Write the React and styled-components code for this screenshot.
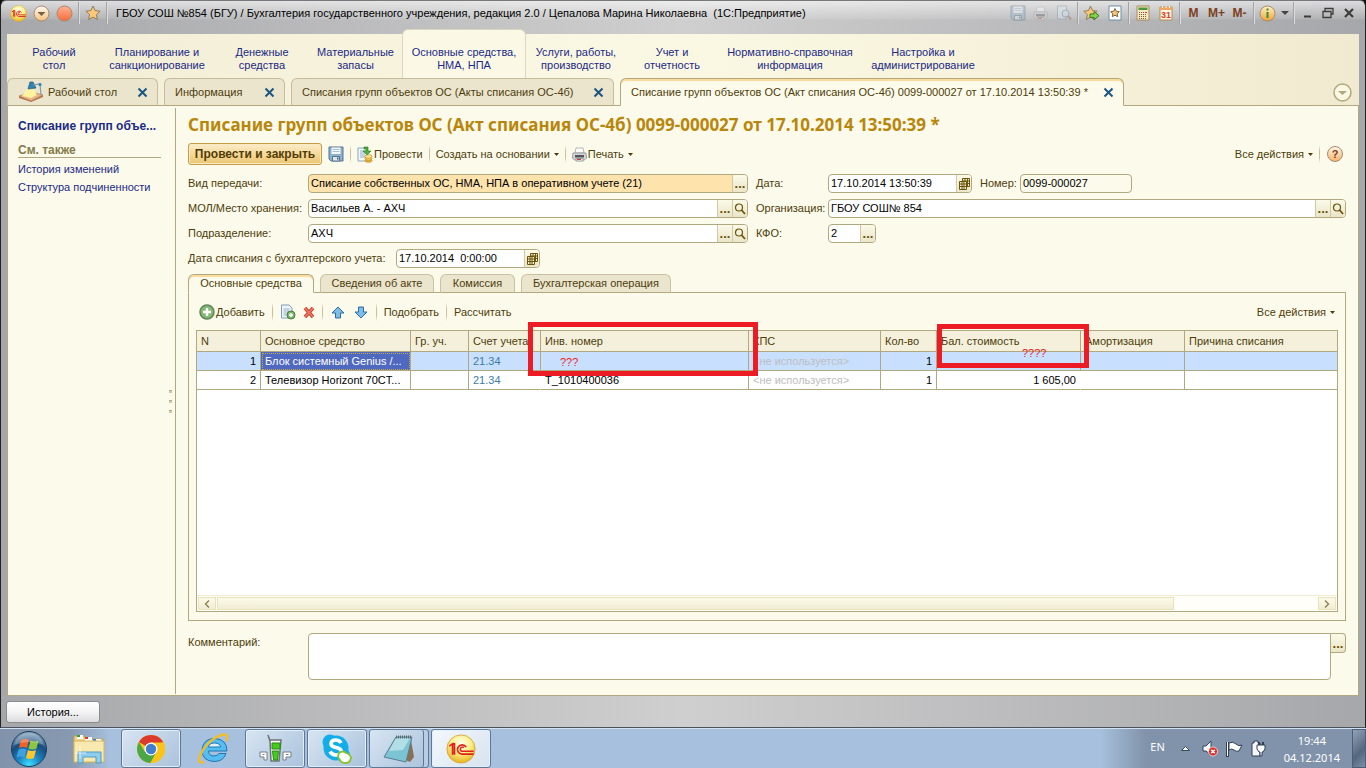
import React from 'react';
import styled, { createGlobalStyle } from 'styled-components';

const line = '#b0a87f';
const ink = '#4d3d0a';
const navy = '#1b2a86';
const cream = '#fcfaea';

const sections = [
    { width: 90, lines: ['Рабочий', 'стол'] },
    { width: 116, lines: ['Планирование и', 'санкционирование'] },
    { width: 94, lines: ['Денежные', 'средства'] },
    { width: 93, lines: ['Материальные', 'запасы'] },
    { width: 124, lines: ['Основные средства,', 'НМА, НПА'], active: true },
    { width: 100, lines: ['Услуги, работы,', 'производство'] },
    { width: 92, lines: ['Учет и', 'отчетность'] },
    { width: 144, lines: ['Нормативно-справочная', 'информация'] },
    { width: 122, lines: ['Настройка и', 'администрирование'] },
];

const windowTabs = [
    { width: 151, title: 'Рабочий стол', icon: true },
    { width: 121, title: 'Информация' },
    { width: 323, title: 'Списания групп объектов ОС (Акты списания ОС-4б)' },
    { width: 504, title: 'Списание групп объектов ОС (Акт списания ОС-4б) 0099-000027 от 17.10.2014 13:50:39 *', active: true },
];

const pageTabs = [
    { width: 126, title: 'Основные средства', active: true },
    { width: 114, title: 'Сведения об акте' },
    { width: 75, title: 'Комиссия' },
    { width: 150, title: 'Бухгалтерская операция' },
];

const columns = [
    { width: 64, title: 'N' },
    { width: 150, title: 'Основное средство' },
    { width: 58, title: 'Гр. уч.' },
    { width: 72, title: 'Счет учета' },
    { width: 208, title: 'Инв. номер' },
    { width: 132, title: 'КПС' },
    { width: 56, title: 'Кол-во' },
    { width: 144, title: 'Бал. стоимость' },
    { width: 104, title: 'Амортизация' },
    { title: 'Причина списания' },
];

const rows = [
    { n: 1, name: 'Блок системный Genius /...', account: '21.34', inv: '', kps: '<не используется>', count: 1, cost: '', current: true },
    { n: 2, name: 'Телевизор Horizont 70CT...', account: '21.34', inv: 'Т_1010400036', kps: '<не используется>', count: 1, cost: '1 605,00' },
];

/* icons */

const Logo1C = ({ size }) => (
    <svg width={size} height={size} viewBox="0 0 32 32">
        <defs>
            <radialGradient id={`gold${size}`} cx="50%" cy="30%" r="70%">
                <stop offset="0" stopColor="#fffef0" />
                <stop offset="0.5" stopColor="#fdf08a" />
                <stop offset="1" stopColor="#e9b21c" />
            </radialGradient>
        </defs>
        <circle cx="16" cy="16" r="15" fill={`url(#gold${size})`} stroke="#d8a63a" />
        <path d="M3.500 13l3.500-2.500V22M9 22V10.500H7" fill="none" stroke="#e0201b" strokeWidth="1.800" />
        <path d="M21.500 14a5 5 0 1 0-4.500 7.500h12.500" fill="none" stroke="#e0201b" strokeWidth="1.800" />
        <path d="M19 14.500a2.300 2.300 0 1 0-2 4h12.500" fill="none" stroke="#e0201b" strokeWidth="1.600" />
    </svg>
);

const Ball = ({ id, light, dark, children }) => (
    <svg width="17" height="17" viewBox="0 0 17 17">
        <defs>
            <linearGradient id={id} x1="0" y1="0" x2="0" y2="1">
                <stop offset="0" stopColor={light} />
                <stop offset="1" stopColor={dark} />
            </linearGradient>
        </defs>
        <circle cx="8.500" cy="8.500" r="7.500" fill={`url(#${id})`} stroke="#a9896a" />
        {children}
    </svg>
);

const Star = () => (
    <svg width="16" height="16" viewBox="0 0 16 16">
        <path d="M8 1l2.100 4.600 5 .6-3.700 3.400 1 5L8 12.100l-4.400 2.500 1-5L.9 6.200l5-.6z" fill="#fbc878" stroke="#8f7c5c" />
    </svg>
);

const StarAdd = () => (
    <svg width="17" height="16" viewBox="0 0 17 16">
        <path d="M7.500 1l2 4.600 4.700.6-3.600 3.400 1 5-4.100-2.500-4.100 2.500 1-5L.8 6.200l4.700-.6z" fill="#fbc878" stroke="#8f7c5c" />
        <path d="M7 9h4V6.500l5 4.200-5 4.200v-2.500H7z" fill="#8ed14a" stroke="#2c7a1e" />
    </svg>
);

const StarDoc = () => (
    <svg width="14" height="16" viewBox="0 0 14 16">
        <path d="M1 1h12v14H1z" fill="#fff" stroke="#6e8fa8" />
        <path d="M7 3.500l1.300 2.800 3 .4-2.200 2 .6 3L7 10.200l-2.700 1.500.6-3-2.200-2 3-.4z" fill="#fbc878" stroke="#7a6640" />
    </svg>
);

const Floppy = () => (
    <svg width="16" height="16" viewBox="0 0 16 16">
        <path d="M1 1h14v14H3l-2-2z" fill="#8db0cc" stroke="#54748f" />
        <path d="M3.500 1.500h9V8h-9z" fill="#f4f8fb" />
        <path d="M4.500 3.500h7M4.500 5.500h7" stroke="#a9c0d2" />
        <path d="M4.500 10.500h7V15h-7z" fill="#dfe7ed" stroke="#54748f" />
        <path d="M9 11.500h1.500v2H9z" fill="#3a5872" />
    </svg>
);

const Printer = () => (
    <svg width="15" height="15" viewBox="0 0 15 15">
        <path d="M4 1h7l1 5H3z" fill="#fff" stroke="#b4b4b4" />
        <path d="M1 6h13l.5 5-2 2h-10l-2-2z" fill="#d4d6d8" stroke="#9a9da1" />
        <path d="M3 8h9v2.500H3z" fill="#54575c" />
        <path d="M4 11.500h7V14H4z" fill="#fff" stroke="#9a9a9a" />
        <path d="M5 12.500h4" stroke="#d33" />
    </svg>
);

const Preview = () => (
    <svg width="16" height="16" viewBox="0 0 16 16">
        <path d="M1.500 1h9v13h-9z" fill="#e4edf5" stroke="#7898b2" />
        <circle cx="9.500" cy="8.500" r="3.500" fill="#cfe6f7" stroke="#5a7e9c" />
        <path d="M12 11l3 3.500" stroke="#a06a44" strokeWidth="2" />
    </svg>
);

const Calculator = () => (
    <svg width="14" height="16" viewBox="0 0 14 16">
        <path d="M1 1h12v14H1z" fill="#f6e7c2" stroke="#a98d5a" />
        <path d="M2.500 2.500h9V5h-9z" fill="#4a9a3c" />
        <path d="M3 7.500h8M3 9.500h8M3 11.500h8M3 13.500h8" stroke="#75603a" strokeDasharray="1 1" />
        <path d="M9.500 7.500h1.500" stroke="#d33" />
    </svg>
);

const Calendar = () => (
    <svg width="14" height="16" viewBox="0 0 14 16">
        <path d="M1 2h12v13H1z" fill="#fff5e4" stroke="#b5884f" />
        <path d="M1 2h12v3H1z" fill="#f0a860" />
        <path d="M3.500 1v2M7 1v2M10.500 1v2" stroke="#fff" />
        <text x="7" y="13" textAnchor="middle" fontFamily="Liberation Sans, sans-serif" fontSize="9" fontWeight="bold" fill="#e0401c">31</text>
    </svg>
);

const DeskLamp = () => (
    <svg width="26" height="22" viewBox="0 0 26 22">
        <path d="M1 15l12-4 12 3-12 6z" fill="#e8b48a" stroke="#b87c50" strokeWidth="0.700" />
        <path d="M1 15v2l12 4 12-5v-2l-12 6z" fill="#b4754a" />
        <path d="M10 7l-6 8 9 2 6-3-4-7z" fill="#fff3a0" />
        <path d="M12 1h3l3 6-8 1z" fill="#2f83b2" stroke="#1c5a80" strokeWidth="0.700" />
        <path d="M15 4l7-1 1 11" fill="none" stroke="#7a9cb2" strokeWidth="1.200" />
        <circle cx="22" cy="3.500" r="1.600" fill="#2f83b2" />
    </svg>
);

const Cross = () => (
    <svg width="11" height="11" viewBox="0 0 11 11">
        <path d="M1.500 1.500l8 8M9.500 1.500l-8 8" stroke="#1d5680" strokeWidth="2" />
    </svg>
);

const Loupe = () => (
    <svg width="12" height="12" viewBox="0 0 12 12">
        <circle cx="5" cy="4.500" r="3.500" fill="none" stroke="#6b540c" strokeWidth="1.200" />
        <path d="M7.500 7l3.500 4" stroke="#6b540c" strokeWidth="1.800" />
    </svg>
);

const DateGrid = () => (
    <svg width="11" height="12" viewBox="0 0 11 12">
        <path d="M3.500 .5h7v8h-7zM3.500 3h7M3.500 5.500h7M6 .5v8M8.500 .5v8" fill="#f3efcf" stroke="#6b540c" />
        <path d="M.5 3.500h7v8h-7zM.5 6h7M.5 8.500h7M3 3.500v8M5 3.500v8" fill="#f3efcf" stroke="#6b540c" />
    </svg>
);

const PostDoc = () => (
    <svg width="16" height="17" viewBox="0 0 16 17">
        <path d="M1 2h9v13H1z" fill="#f5f9fc" stroke="#8aa5ba" />
        <path d="M3 5h5M3 7h5M3 9h5M3 11h5" stroke="#8fb0c9" />
        <path d="M7 1h4v4h3l-4 4-4-4h3V3H7z" fill="#4fae3c" stroke="#247a1c" strokeWidth="0.600" />
        <ellipse cx="11.500" cy="14.500" rx="3.500" ry="1.800" fill="#eab42c" stroke="#b98a28" strokeWidth="0.700" />
        <ellipse cx="11.500" cy="12.500" rx="3.500" ry="1.800" fill="#f8d058" stroke="#b98a28" strokeWidth="0.700" />
        <ellipse cx="11.500" cy="10.500" rx="3.500" ry="1.800" fill="#ffe68a" stroke="#b98a28" strokeWidth="0.700" />
    </svg>
);

const AddBall = () => (
    <svg width="16" height="16" viewBox="0 0 16 16">
        <circle cx="8" cy="8" r="7" fill="#86b878" stroke="#5f8457" strokeWidth="1.500" />
        <path d="M8 4v8M4 8h8" stroke="#fff" strokeWidth="2.400" />
    </svg>
);

const CopyDoc = () => (
    <svg width="16" height="16" viewBox="0 0 16 16">
        <path d="M1.500 1H9l3 3v10H1.500z" fill="#eef5fa" stroke="#7f9db3" />
        <path d="M3.500 5h6M3.500 7h6M3.500 9h4M3.500 11h4" stroke="#93b2c9" />
        <circle cx="11" cy="11" r="4" fill="#7db768" stroke="#4a7d3c" />
        <path d="M11 9v4M9 11h4" stroke="#fff" strokeWidth="1.500" />
    </svg>
);

const Delete = () => (
    <svg width="12" height="13" viewBox="0 0 12 13">
        <path d="M2 2l8 9M10 2l-8 9" stroke="#c23d2c" strokeWidth="3.400" />
        <path d="M2 2l8 9M10 2l-8 9" stroke="#ee7767" strokeWidth="1.800" />
    </svg>
);

const Arrow = ({ down }) => (
    <svg width="16" height="13" viewBox="-1 0 16 13">
        <path d={down ? 'M4.500 1h5v5H13l-6 6-6-6h3.500z' : 'M4.500 12h5V7H13L7 1 1 7h3.500z'} fill="#7cbdea" stroke="#2d6da0" />
    </svg>
);

const Chevron = ({ left }) => (
    <svg width="6" height="8" viewBox="0 0 6 8">
        <path d={left ? 'M5 0.500L1.500 4 5 7.500' : 'M1 0.500L4.500 4 1 7.500'} fill="none" stroke="#8c8150" strokeWidth="1.400" />
    </svg>
);

const Windows = () => (
    <svg width="38" height="38" viewBox="0 0 38 38">
        <defs>
            <radialGradient id="orb" cx="50%" cy="95%" r="90%">
                <stop offset="0" stopColor="#3fe0ff" />
                <stop offset="0.350" stopColor="#1c86c4" />
                <stop offset="0.700" stopColor="#174d7c" />
                <stop offset="1" stopColor="#7f9fbb" />
            </radialGradient>
        </defs>
        <circle cx="19" cy="19" r="17.500" fill="url(#orb)" stroke="#1d3c5c" />
        <path d="M11 10q4-2 8 0l-2 8q-4-2-8 0z" fill="#f0622a" />
        <path d="M20.500 10.500q4 2 8 0l-2 8q-4 2-8 0z" fill="#8cc63e" />
        <path d="M8.500 19.500q4-2 8 0l-2 8q-4-2-8 0z" fill="#3f9fe0" />
        <path d="M18 20q4 2 8 0l-2 8q-4 2-8 0z" fill="#fcc62c" />
        <path d="M4 15Q8 3 19 3t15 12Q19 9 4 15z" fill="#fff" opacity="0.250" />
    </svg>
);

const Explorer = () => (
    <svg width="34" height="32" viewBox="0 0 34 32">
        <path d="M2 3h10l2 3h17v23H2z" fill="#f0d486" stroke="#c69f45" />
        <path d="M5 2h6v4H5z" fill="#fff" /><path d="M5 2h3v2H5z" fill="#2da32f" />
        <path d="M13 4h7v4h-7z" fill="#fff" /><path d="M13 4h3v2h-3z" fill="#d83c2c" />
        <path d="M21 6h8v4h-8z" fill="#fff" /><path d="M21 6h3v2h-3z" fill="#2c87d8" />
        <path d="M2 8h30v21H2z" fill="#fae9ae" stroke="#d6b45c" />
        <path d="M6 30V19h23v11h-5v-6H11v6z" fill="#8fcdec" stroke="#4f9cc8" />
        <path d="M8 13v13M3 20h11" stroke="#fff" opacity="0.700" />
    </svg>
);

const Chrome = () => (
    <svg width="30" height="30" viewBox="0 0 30 30">
        <circle cx="15" cy="15" r="14" fill="#fbc518" />
        <path d="M15 15L2.900 8a14 14 0 0 1 24.300 0z" fill="#dc3a2c" />
        <path d="M2.900 8a14 14 0 0 0 11.500 21l6-11L15 15 9 18z" fill="#4ba745" />
        <path d="M15 8.500h12.400A14 14 0 0 1 14.400 29l6.200-10.500z" fill="#fbc518" />
        <circle cx="15" cy="15" r="6.500" fill="#fff" />
        <circle cx="15" cy="15" r="5.200" fill="#3f7fce" />
    </svg>
);

const InternetExplorer = () => (
    <svg width="32" height="32" viewBox="0 0 32 32">
        <path d="M30 18H11.500q.5 5 5.500 5 3.500 0 5-2.500h7Q26.500 28.500 17 28.500 5 28 5 17 6 5.500 17.500 5.500 30 6 30 18z" fill="#56bdf0" stroke="#2176b4" />
        <path d="M11.500 14h12q-.5-4-6-4t-6 4z" fill="#dff0fa" stroke="#2176b4" />
        <path d="M7 29q-7 2-4-6Q7 12 18 5q11-6 12-2 .5 2-1 5" fill="none" stroke="#f4bd25" strokeWidth="2.400" />
    </svg>
);

const Robot = () => (
    <svg width="34" height="30" viewBox="0 0 34 30">
        <path d="M10 1l2 6M12 6h11l-2 21h-8z" fill="#f8f8f8" stroke="#6d7277" strokeWidth="1.500" />
        <path d="M14 9h8v6h-8zM14.500 17h6l-1 9h-4z" fill="#46cc1c" stroke="#278d0c" />
        <path d="M2 18h7v8H6v-3H2zM25 18h8v5h-5v3h-3z" fill="#fff" stroke="#777c82" />
        <path d="M4.500 20.500h2M28 20.500h2.500" stroke="#777c82" />
    </svg>
);

const Skype = () => (
    <svg width="32" height="32" viewBox="0 0 32 32">
        <circle cx="15" cy="15" r="12.500" fill="#12aeea" />
        <circle cx="9" cy="9" r="7.500" fill="#12aeea" /><circle cx="22" cy="22" r="7" fill="#12aeea" />
        <path d="M20 10q-1.500-3-5.500-3T10 10.500q0 3 5 4t5.500 4Q20 22 15.500 22T9 18.500" fill="none" stroke="#fff" strokeWidth="3.600" />
        <path d="M18 20q4-3 7 0 4 1 5 5-1 5-5 5-5 0-6-3-3-3-1-7z" fill="#fff" stroke="#86c32c" strokeWidth="1.800" />
    </svg>
);

const Notepad = () => (
    <svg width="32" height="30" viewBox="0 0 32 30">
        <path d="M28 6l3 17-4 5-4-2z" fill="#8a6f56" />
        <path d="M13 3h16l-6 25L1 23z" fill="#7cc4d4" stroke="#55808e" />
        <path d="M13 4h14L20 16 6 17z" fill="#c8e9ef" opacity="0.700" />
        <path d="M13 3h16" stroke="#60676b" strokeWidth="3" strokeDasharray="1 1" />
    </svg>
);

const Speaker = () => (
    <svg width="16" height="17" viewBox="0 0 16 17">
        <path d="M1 6h3l5-5v14l-5-4H1z" fill="#f5f7fa" stroke="#33435a" />
        <circle cx="11" cy="11.500" r="4.500" fill="#dc2a22" stroke="#fff" strokeWidth="0.700" />
        <path d="M9.200 9.700l3.600 3.600M12.800 9.700l-3.600 3.600" stroke="#fff" strokeWidth="1.500" />
    </svg>
);

const Flag = () => (
    <svg width="17" height="16" viewBox="0 0 17 16">
        <path d="M3 2q4-2 7 1t6 1l-3 6q-3 1-5-1t-5 0z" fill="#fff" stroke="#2f3f55" />
        <path d="M1.500 1v15" stroke="#2f3f55" strokeWidth="3" /><path d="M1.500 1v14" stroke="#fff" />
    </svg>
);

const Plug = () => (
    <svg width="15" height="17" viewBox="0 0 15 17">
        <path d="M1 3h2V1h4v2h2v13H1z" fill="#f4f6f9" stroke="#2f3f55" />
        <path d="M6 5h8v4l-2 3h-1v4H9v-4H8L6 9z" fill="#fff" stroke="#2f3f55" />
        <path d="M8 2v3M12 2v3" stroke="#2f3f55" strokeWidth="2" />
    </svg>
);

const Caret = () => (
    <CaretSvg width="5" height="3" viewBox="0 0 5 3"><path d="M0 0h5L2.500 3z" fill={ink} /></CaretSvg>
);

const ComboField = ({ id, label, value, tint, readOnly, width, date, loupe, plain, inset }) => (
    <>
        <Label htmlFor={id} $inset={inset}>{label}</Label>
        <Field $tint={tint} $width={width}>
            <FieldInput id={id} defaultValue={value} readOnly={readOnly} />
            {!plain && (
                <FieldButton type="button" aria-label="Выбрать">
                    {date ? <DateGrid /> : <Dots>...</Dots>}
                </FieldButton>
            )}
            {loupe && <FieldButton type="button" aria-label="Открыть"><Loupe /></FieldButton>}
        </Field>
    </>
);

const App = () => {
    return (
        <Screen>
            <GlobalStyle />
            <Window>
                <TitleBar>
                    <TitleButton type="button" aria-label="1С"><Logo1C size={17} /></TitleButton>
                    <TitleButton type="button" aria-label="Меню">
                        <Ball id="menuBall" light="#fffdf5" dark="#f3c07a"><path d="M4.500 7h8l-4 4z" fill="#7a6040" /></Ball>
                    </TitleButton>
                    <TitleButton type="button" aria-label="Стоп"><Ball id="stopBall" light="#ffb193" dark="#f56c3c" /></TitleButton>
                    <TitleSeparator />
                    <TitleButton type="button" aria-label="Избранное"><Star /></TitleButton>
                    <TitleSeparator />
                    <Caption>ГБОУ СОШ №854 (БГУ) / Бухгалтерия государственного учреждения, редакция 2.0 / Цепалова Марина Николаевна &nbsp;(1С:Предприятие)</Caption>
                    <TitleButton type="button" aria-label="Сохранить" disabled><Floppy /></TitleButton>
                    <TitleButton type="button" aria-label="Печать" disabled><Printer /></TitleButton>
                    <TitleButton type="button" aria-label="Просмотр" disabled><Preview /></TitleButton>
                    <TitleSeparator />
                    <TitleButton type="button" aria-label="Добавить в избранное"><StarAdd /></TitleButton>
                    <TitleButton type="button" aria-label="Ссылки"><StarDoc /></TitleButton>
                    <TitleSeparator />
                    <TitleButton type="button" aria-label="Калькулятор"><Calculator /></TitleButton>
                    <TitleButton type="button" aria-label="Календарь"><Calendar /></TitleButton>
                    <TitleSeparator />
                    <TitleButton type="button">M</TitleButton>
                    <TitleButton type="button">M+</TitleButton>
                    <TitleButton type="button">M-</TitleButton>
                    <TitleSeparator />
                    <TitleButton type="button" aria-label="О программе">
                        <Ball id="infoBall" light="#fff0c8" dark="#f0a436">
                            <path d="M8.500 7v6M8.500 3.500v2" stroke="#3f8a2c" strokeWidth="2" />
                        </Ball>
                    </TitleButton>
                    <TitleButton type="button" aria-label="Ещё" $width={12}>
                        <svg width="8" height="4" viewBox="0 0 8 4"><path d="M0 0h8L4 4z" fill="#444" /></svg>
                    </TitleButton>
                    <TitleSeparator />
                    <TitleButton type="button" aria-label="Свернуть" $width={21}>
                        <svg width="12" height="12" viewBox="0 0 12 12"><path d="M3 9.500h7" stroke="#3c3c3c" strokeWidth="2" /></svg>
                    </TitleButton>
                    <TitleButton type="button" aria-label="Восстановить" $width={21}>
                        <svg width="12" height="12" viewBox="0 0 12 12"><path d="M3 4V1.500h8V7H9M1 4.500h8v6H1z" fill="none" stroke="#3c3c3c" strokeWidth="1.300" /></svg>
                    </TitleButton>
                    <TitleButton type="button" aria-label="Закрыть" $width={21}>
                        <svg width="10" height="10" viewBox="0 0 10 10"><path d="M1 1l8 8M9 1L1 9" stroke="#3c3c3c" strokeWidth="2.200" /></svg>
                    </TitleButton>
                </TitleBar>

                <Sections>
                    {sections.map((s) => (
                        <Section key={s.lines[0]} href="#" $width={s.width} $active={s.active}>
                            {s.lines[0]}<br />{s.lines[1]}
                        </Section>
                    ))}
                </Sections>

                <WindowTabs>
                    {windowTabs.map((t) => (
                        <WindowTab key={t.title} $width={t.width} $active={t.active}>
                            {t.icon && <DeskLamp />}
                            <TabTitle type="button">{t.title}</TabTitle>
                            <TabClose type="button" aria-label="Закрыть вкладку"><Cross /></TabClose>
                        </WindowTab>
                    ))}
                    <TabsRest>
                        <TabClose type="button" aria-label="Список окон">
                            <svg width="19" height="19" viewBox="0 0 19 19">
                                <circle cx="9.500" cy="9.500" r="8.500" fill="#faf7e2" stroke={line} strokeWidth="1.500" />
                                <path d="M5 8h9l-4.500 4z" fill={line} />
                            </svg>
                        </TabClose>
                    </TabsRest>
                </WindowTabs>

                <Workspace>
                    <Sidebar>
                        <CurrentLink href="#">Списание групп объе...</CurrentLink>
                        <SideHeading>См. также</SideHeading>
                        <SideLink href="#">История изменений</SideLink>
                        <SideLink href="#">Структура подчиненности</SideLink>
                    </Sidebar>
                    <Grip><i /><i /><i /></Grip>

                    <Form>
                        <Title>Списание групп объектов ОС (Акт списания ОС-4б) 0099-000027 от 17.10.2014 13:50:39 *</Title>
                        <Commands>
                            <PrimaryButton type="button">Провести и закрыть</PrimaryButton>
                            <Command type="button" aria-label="Записать"><Floppy /></Command>
                            <Separator />
                            <Command type="button"><PostDoc />Провести</Command>
                            <Separator />
                            <Command type="button">Создать на основании <Caret /></Command>
                            <Separator />
                            <Command type="button"><Printer />Печать <Caret /></Command>
                            <Spacer />
                            <Command type="button">Все действия <Caret /></Command>
                            <Separator />
                            <HelpButton type="button" aria-label="Справка">?</HelpButton>
                        </Commands>

                        <Fields>
                            <ComboField id="kind" label="Вид передачи:" value="Списание собственных ОС, НМА, НПА в оперативном учете (21)" tint="#fee3ad" />
                            <ComboField id="date" label="Дата:" value="17.10.2014 13:50:39" date width={144} inset={8} />
                            <NumberCell>
                                <ComboField id="number" label="Номер:" value="0099-000027" plain readOnly tint={cream} width={112} />
                            </NumberCell>
                            <ComboField id="place" label="МОЛ/Место хранения:" value="Васильев А. - АХЧ" loupe />
                            <ComboField id="org" label="Организация:" value="ГБОУ СОШ№ 854" loupe inset={8} />
                            <ComboField id="unit" label="Подразделение:" value="АХЧ" loupe />
                            <ComboField id="kfo" label="КФО:" value="2" width={48} inset={8} />
                        </Fields>
                        <DateRow>
                            <ComboField id="offDate" label="Дата списания с бухгалтерского учета:" value="17.10.2014  0:00:00" date width={144} />
                        </DateRow>

                        <PageTabs>
                            {pageTabs.map((t) => (
                                <PageTab key={t.title} type="button" $width={t.width} $active={t.active}>{t.title}</PageTab>
                            ))}
                        </PageTabs>
                        <Page>
                            <TableCommands>
                                <Command type="button"><AddBall />Добавить</Command>
                                <Separator />
                                <Command type="button" aria-label="Скопировать"><CopyDoc /></Command>
                                <Command type="button" aria-label="Удалить"><Delete /></Command>
                                <Separator />
                                <Command type="button" aria-label="Вверх"><Arrow /></Command>
                                <Command type="button" aria-label="Вниз"><Arrow down /></Command>
                                <Separator />
                                <Command type="button">Подобрать</Command>
                                <Separator />
                                <Command type="button">Рассчитать</Command>
                                <Spacer />
                                <Command type="button">Все действия <Caret /></Command>
                            </TableCommands>
                            <TableBox>
                                <Table>
                                    <colgroup>
                                        {columns.map((c) => <Column key={c.title} $width={c.width} />)}
                                    </colgroup>
                                    <thead>
                                        <tr>{columns.map((c) => <HeadCell key={c.title}>{c.title}</HeadCell>)}</tr>
                                    </thead>
                                    <tbody>
                                        {rows.map((r) => (
                                            <Row key={r.n} $current={r.current}>
                                                <Cell $right>{r.n}</Cell>
                                                <Cell $selected={r.current}>{r.name}</Cell>
                                                <Cell />
                                                <Cell $color="#3d7ba8" $open={!r.current}>{r.account}</Cell>
                                                <Cell>{r.inv}</Cell>
                                                <Cell $color="#bdbdbd">{r.kps}</Cell>
                                                <Cell $right>{r.count}</Cell>
                                                <Cell $right $open={!r.current}>{r.cost}</Cell>
                                                <Cell />
                                                <Cell />
                                            </Row>
                                        ))}
                                    </tbody>
                                </Table>
                                <ScrollBar>
                                    <ScrollButton type="button" aria-label="Влево"><Chevron left /></ScrollButton>
                                    <ScrollTrack><ScrollThumb /></ScrollTrack>
                                    <ScrollButton type="button" aria-label="Вправо"><Chevron /></ScrollButton>
                                </ScrollBar>
                                <InvMark>???</InvMark>
                                <CostMark>????</CostMark>
                            </TableBox>
                        </Page>

                        <CommentRow>
                            <Label htmlFor="comment">Комментарий:</Label>
                            <Comment id="comment" />
                            <CommentButton type="button" aria-label="Изменить комментарий"><Dots>...</Dots></CommentButton>
                        </CommentRow>
                    </Form>
                </Workspace>

                <StatusBar>
                    <HistoryButton type="button">История...</HistoryButton>
                </StatusBar>
            </Window>

            <TaskBar>
                <TaskButton type="button" aria-label="Пуск" $width={57}><Windows /></TaskButton>
                <TaskButton type="button" aria-label="Проводник" $width={60}><Explorer /></TaskButton>
                <TaskButton type="button" aria-label="Chrome" $width={60} $open><Chrome /></TaskButton>
                <TaskButton type="button" aria-label="Internet Explorer" $width={60}><InternetExplorer /></TaskButton>
                <TaskButton type="button" aria-label="QIP" $width={60} $open><Robot /></TaskButton>
                <TaskButton type="button" aria-label="Skype" $width={60} $open><Skype /></TaskButton>
                <TaskButton type="button" aria-label="Блокнот" $width={60} $open $stacked><Notepad /></TaskButton>
                <TaskButton type="button" aria-label="1С:Предприятие" $width={60} $open $front><Logo1C size={30} /></TaskButton>
                <Tray>
                    <Language>EN</Language>
                    <svg width="9" height="5" viewBox="0 0 9 5"><path d="M.5 4.500h8L4.500.5z" fill="#fff" stroke="#3c4c62" /></svg>
                    <TrayIcons><Speaker /><Flag /><Plug /></TrayIcons>
                    <Clock>19:44<br />04.12.2014</Clock>
                    <ShowDesktop type="button" aria-label="Свернуть все окна" />
                </Tray>
            </TaskBar>
        </Screen>
    );
};

export default App;

const GlobalStyle = createGlobalStyle`
    *{
        box-sizing:border-box;
    }
    body{
        margin:0;
        background:#111;
        font:11px/13px "Liberation Sans", Arial, sans-serif;
        color:${ink};
    }
    button, input, textarea{
        font:inherit;
        color:inherit;
        margin:0;
        padding:0;
        border:0;
        background:none;
    }
    a{
        color:${navy};
        text-decoration:none;
    }
    svg{
        display:block;
        flex:none;
    }
`

const Screen = styled.div`
    display:flex;
    flex-direction:column;
    min-height:100vh;
`

const Window = styled.div`
    flex:1;
    display:flex;
    flex-direction:column;
    padding:0 6px;
    border:1px solid #222;
    border-top-color:#77787c;
    border-bottom-color:#4a525e;
    border-radius:6px 6px 0 0;
    background:
        linear-gradient(rgba(255,255,255,0.6), rgba(255,255,255,0.1) 18px, rgba(255,255,255,0) 19px),
        linear-gradient(90deg, #a6a7aa, #cfcfcf 50%, #a6a7aa);
`

const TitleBar = styled.header`
    display:flex;
    align-items:center;
    height:24px;
    margin-bottom:4px;
`

const TitleButton = styled.button`
    display:flex;
    align-items:center;
    justify-content:center;
    flex:none;
    width:${(p) => p.$width || 23}px;
    height:20px;
    font-size:12px;
    font-weight:bold;
    color:#7c4020;

    &:disabled{
        opacity:0.4;
    }
`

const TitleSeparator = styled.span`
    width:1px;
    height:22px;
    margin:0 2px;
    background:#a2a3a6;
    box-shadow:1px 0 #dcdcdc;
`

const Caption = styled.div`
    flex:1;
    min-width:0;
    padding-left:7px;
    overflow:hidden;
    white-space:nowrap;
    line-height:16px;
    color:#000;
`

const Sections = styled.nav`
    display:flex;
    height:49px;
    padding-left:2px;
    background:linear-gradient(90deg, #f2ecd4, #faf8e3 45%, #f9f6e0 60%, #f1ead0) 0 5px no-repeat;
`

const Section = styled.a`
    flex:none;
    width:${(p) => p.$width}px;
    padding-top:16px;
    border-radius:6px 6px 0 0;
    border:1px solid transparent;
    border-bottom:0;
    text-align:center;
    background:${(p) => p.$active ? '#fbf9e6' : 'none'};
    border-color:${(p) => p.$active ? '#d9d5c0' : 'transparent'};
`

const WindowTabs = styled.div`
    display:flex;
    gap:6px;
    height:28px;
    background:linear-gradient(90deg, #f2ecd4, #faf8e3 45%, #f9f6e0 60%, #f1ead0);
    box-shadow:inset 0 -1px ${line};
`

const WindowTab = styled.div`
    flex:none;
    display:flex;
    align-items:center;
    width:${(p) => p.$width}px;
    padding:0 9px 0 10px;
    border:1px solid ${(p) => p.$active ? line : '#c4bc9c'};
    border-bottom-color:${(p) => p.$active ? cream : line};
    border-radius:6px 6px 0 0;
    background:${(p) => p.$active ? cream : '#ebe5ce'};
    box-shadow:${(p) => p.$active ? 'inset 0 2px #fbdc9a' : 'none'};
`

const TabTitle = styled.button`
    flex:1;
    min-width:0;
    overflow:hidden;
    white-space:nowrap;
    text-align:left;

    svg + &{
        padding-left:4px;
    }
`

const TabClose = styled.button`
    display:flex;
`

const TabsRest = styled.div`
    flex:1;
    display:flex;
    align-items:center;
    justify-content:flex-end;
    padding-right:7px;
`

const Workspace = styled.div`
    flex:1;
    display:flex;
    background:${cream};
    border:1px solid ${line};
    border-top:0;
`

const Sidebar = styled.aside`
    flex:none;
    display:flex;
    flex-direction:column;
    width:153px;
    padding:13px 0 0 10px;
`

const CurrentLink = styled.a`
    font-size:12px;
    line-height:14px;
    font-weight:bold;
    white-space:nowrap;
`

const SideHeading = styled.h2`
    margin:10px 0 5px;
    border-bottom:1px solid ${line};
    font-size:12px;
    line-height:14px;
    color:#847a4c;
`

const SideLink = styled.a`
    line-height:13px;
    margin-bottom:5px;
    white-space:nowrap;
`

const Grip = styled.div`
    flex:none;
    display:flex;
    flex-direction:column;
    justify-content:center;
    align-items:center;
    gap:7px;
    width:15px;
    margin:2px 0 1px;
    padding-left:4px;
    border-right:1px solid ${line};

    i{
        width:3px;
        height:3px;
        background:#cfc9ad;
        border-top:1px solid ${line};
    }
`

const Form = styled.main`
    flex:1;
    min-width:0;
    display:flex;
    flex-direction:column;
    padding:7px 12px 15px;
`

const Title = styled.h1`
    margin:0 0 6px;
    font:bold 17px/24px "Noto Sans", sans-serif;
    color:#b8860b;
    white-space:nowrap;
`

const Commands = styled.div`
    display:flex;
    align-items:center;
    height:22px;
    margin-bottom:9px;
`

const PrimaryButton = styled.button`
    width:134px;
    height:22px;
    margin-right:3px;
    border:1px solid #c69c48;
    border-radius:3px;
    background:linear-gradient(#fbeccb, #f4d691 60%, #e9c474);
    box-shadow:inset 0 0 0 1px #fbe9bf;
    font-size:12px;
    font-weight:bold;
    color:#523c06;
    white-space:nowrap;
`

const Command = styled.button`
    display:flex;
    align-items:center;
    gap:1px;
    height:20px;
    padding:0 3px;
    white-space:nowrap;
`

const CaretSvg = styled.svg`
    margin-left:3px;
`

const Separator = styled.span`
    width:1px;
    height:18px;
    margin:0 3px;
    background:linear-gradient(rgba(176,168,127,0), #c9c29f 30%, #c9c29f 70%, rgba(176,168,127,0));
`

const Spacer = styled.span`
    flex:1;
`

const HelpButton = styled.button`
    width:16px;
    height:16px;
    margin:0 3px 0 4px;
    border:1px solid #a48b70;
    border-radius:50%;
    background:linear-gradient(#fff4e4, #f6b56c);
    font-weight:bold;
    line-height:13px;
    color:#7c4020;
`

const Fields = styled.div`
    display:grid;
    grid-template-columns:120px minmax(0, 440fr) 80px 144px minmax(0, 374fr);
    row-gap:6px;

    /* the organization field spans the rest of the row */
    > :nth-child(9){
        grid-column:4 / 6;
    }
`

const Label = styled.label`
    padding-left:${(p) => p.$inset || 0}px;
    line-height:19px;
    white-space:nowrap;
`

const Field = styled.div`
    display:flex;
    width:${(p) => p.$width ? p.$width + 'px' : 'auto'};
    height:19px;
    border:1px solid ${line};
    border-radius:4px;
    background:${(p) => p.$tint || '#fff'};
    overflow:hidden;
`

const FieldInput = styled.input`
    flex:1;
    min-width:0;
    padding-left:2px;
    color:#000;
    outline:0;
`

const FieldButton = styled.button`
    display:flex;
    align-items:center;
    justify-content:center;
    flex:none;
    width:15px;
    border-left:1px solid #cfc9a8;
    background:linear-gradient(#fbf9e8, #ebe6c8);
`

const Dots = styled.span`
    font-size:13px;
    font-weight:bold;
    line-height:17px;
    color:#6b540c;
`

const NumberCell = styled.div`
    display:flex;
    gap:3px;
    padding-left:8px;
`

const DateRow = styled.div`
    display:flex;
    gap:8px;
    margin:6px 0;

    label{
        width:200px;
    }
`

const PageTabs = styled.div`
    display:flex;
    gap:6px;
    height:19px;
    position:relative;
    margin-bottom:-1px;
`

const PageTab = styled.button`
    width:${(p) => p.$width}px;
    border:1px solid ${(p) => p.$active ? line : '#c9c2a2'};
    border-bottom-color:${(p) => p.$active ? cream : line};
    border-radius:6px 6px 0 0;
    background:${(p) => p.$active ? cream : '#ebe5ce'};
    box-shadow:${(p) => p.$active ? 'inset 0 2px #fbdc9a' : 'none'};
    white-space:nowrap;
`

const Page = styled.section`
    flex:1;
    display:flex;
    flex-direction:column;
    padding:9px 7px 8px;
    border:1px solid ${line};
`

const TableCommands = styled.div`
    display:flex;
    align-items:center;
    gap:1px;
    height:20px;
    margin-bottom:8px;
`

const TableBox = styled.div`
    flex:1;
    display:flex;
    flex-direction:column;
    position:relative;
    border:1px solid ${line};
    background:#fff;
`

const Table = styled.table`
    width:100%;
    table-layout:fixed;
    border-collapse:separate;
    border-spacing:0;
`

const Column = styled.col`
    width:${(p) => p.$width ? p.$width + 'px' : 'auto'};
`

const HeadCell = styled.th`
    height:21px;
    padding:0 4px;
    border-right:1px solid ${line};
    border-bottom:1px solid ${line};
    background:#f4f0dc;
    font-weight:normal;
    text-align:left;
    white-space:nowrap;

    &:last-child{
        border-right:0;
    }
`

const Row = styled.tr`
    background:${(p) => p.$current ? '#c8e0fe' : '#fff'};
`

const Cell = styled.td`
    height:19px;
    padding:0 4px;
    border-right:1px solid ${(p) => p.$open ? 'transparent' : line};
    border-bottom:1px solid ${line};
    background:${(p) => p.$selected ? '#5069c0' : 'none'};
    outline:${(p) => p.$selected ? '1px dotted #c8a848' : 'none'};
    outline-offset:-2px;
    color:${(p) => p.$selected ? '#fff' : p.$color || '#000'};
    text-align:${(p) => p.$right ? 'right' : 'left'};
    white-space:nowrap;

    &:last-child{
        border-right:0;
    }
`

const ScrollBar = styled.div`
    display:flex;
    gap:1px;
    height:16px;
    margin-top:auto;
    padding:1px;
    border-top:1px solid #f0ebd2;
    background:#fffef8;
`

const ScrollButton = styled.button`
    display:flex;
    align-items:center;
    justify-content:center;
    width:18px;
    border:1px solid #ebe3b8;
    background:linear-gradient(#fcfaea, #f0ecd4);
`

const ScrollTrack = styled.div`
    flex:1;
    display:flex;
`

const ScrollThumb = styled.div`
    width:87%;
    border:1px solid #ebe3b8;
    background:linear-gradient(#fcfaea, #f0ecd4);
`

const Mark = styled.div`
    position:absolute;
    border:5px solid #ed1c24;
    color:#ed1c24;
    line-height:14px;
`

const InvMark = styled(Mark)`
    left:331px;
    top:-9px;
    width:230px;
    height:54px;
    padding:28px 0 0 27px;
`

const CostMark = styled(Mark)`
    left:740px;
    top:-7px;
    width:152px;
    height:44px;
    padding:17px 0 0 80px;
`

const CommentRow = styled.div`
    display:flex;
    align-items:flex-start;
    margin-top:12px;

    label{
        width:120px;
    }
`

const Comment = styled.textarea`
    flex:1;
    height:47px;
    border:1px solid ${line};
    border-radius:4px 0 4px 4px;
    background:#fff;
    resize:none;
`

const CommentButton = styled.button`
    width:15px;
    height:20px;
    border:1px solid ${line};
    border-left:0;
    border-radius:0 4px 4px 0;
    background:linear-gradient(#fbf9e8, #ebe6c8);
`

const StatusBar = styled.footer`
    display:flex;
    height:31px;
    padding-top:5px;
    margin-left:-1px;
`

const HistoryButton = styled.button`
    width:94px;
    height:22px;
    border:1px solid #8b8c90;
    border-radius:3px;
    background:linear-gradient(#fff, #f4f4f5 50%, #dcdcde);
    color:#000;
`

const TaskBar = styled.footer`
    display:flex;
    gap:2px;
    height:40px;
    border-top:1px solid #d3e2f2;
    background:linear-gradient(90deg, #8193aa, #8699b1 70px, #a7c0dd 110px, #a7c0dd calc(100% - 266px), #8193aa calc(100% - 220px));
`

const TaskButton = styled.button`
    display:flex;
    align-items:center;
    justify-content:center;
    width:${(p) => p.$width}px;
    border:1px solid ${(p) => p.$open ? '#5c7896' : 'transparent'};
    border-radius:3px;
    background:${(p) => p.$front ? 'linear-gradient(135deg, #f4f8fc, #d6e3f0)' : p.$open ? 'linear-gradient(135deg, #d8e5f2, #a9c2dc)' : 'none'};
    box-shadow:${(p) => p.$stacked ? 'inset -4px 0 #b9cde2, inset -5px 0 #5c7896' : p.$open ? 'inset 0 0 0 1px #e4eef8' : 'none'};
`

const Tray = styled.div`
    display:flex;
    align-items:center;
    margin-left:auto;
    font:11px/17px "Noto Sans", sans-serif;
    color:#fff;
`

const Language = styled.span`
    margin-right:16px;
    padding-bottom:4px;
`

const TrayIcons = styled.div`
    display:flex;
    align-items:center;
    gap:8px;
    margin:0 18px 0 12px;
`

const Clock = styled.div`
    text-align:center;
    margin-right:12px;
`

const ShowDesktop = styled.button`
    align-self:stretch;
    width:14px;
    border:1px solid #4c5f76;
    background:linear-gradient(135deg, #93a3b7, #55677f 60%, #7d8fa6);
`
